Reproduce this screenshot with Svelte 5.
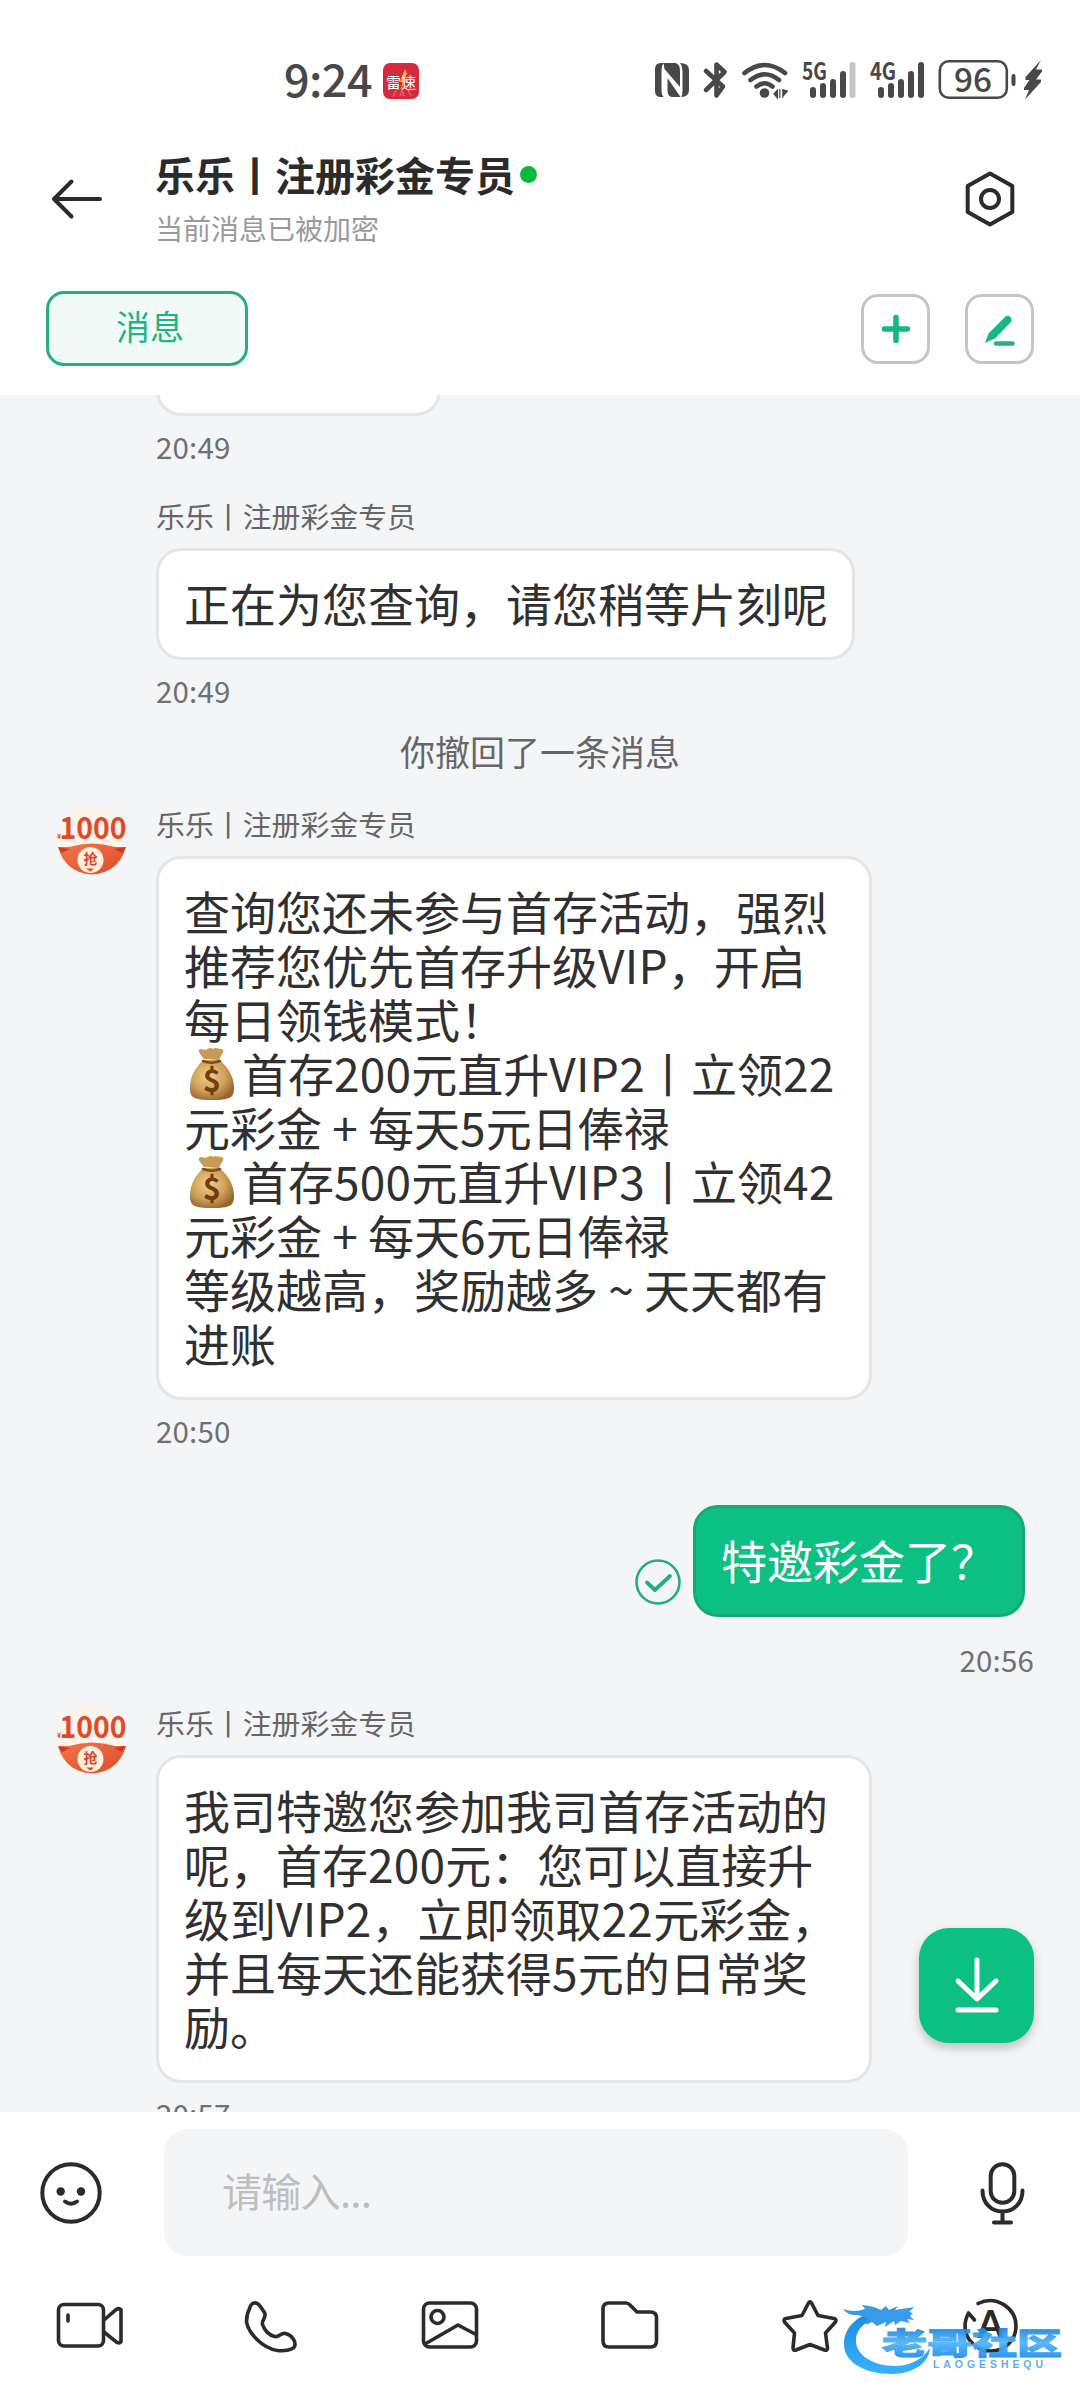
<script>
  const agent = '乐乐丨注册彩金专员';

  const promo = [
    '查询您还未参与首存活动，强烈',
    '推荐您优先首存升级VIP，开启',
    '每日领钱模式！',
    '$首存200元直升VIP2丨立领22',
    '元彩金+每天5元日俸禄',
    '$首存500元直升VIP3丨立领42',
    '元彩金+每天6元日俸禄',
    '等级越高，奖励越多~天天都有',
    '进账'
  ];

  const invite = [
    '我司特邀您参加我司首存活动的',
    '呢，首存200元：您可以直接升',
    '级到VIP2，立即领取22元彩金，',
    '并且每天还能获得5元的日常奖',
    '励。'
  ];

  // "$" marks a money bag, "+" and "~" are centred in a full-width cell
  const split = (line) => line.split(/([$+~]|[A-Z0-9]+)/).filter(Boolean);
  const isLatin = (part) => /^[A-Z0-9]/.test(part);
</script>

{#snippet moneyBag()}
  <svg class="bag" viewBox="0 0 58 54" aria-hidden="true">
    <defs>
      <radialGradient id="bagFill" cx="0.42" cy="0.4" r="0.65">
        <stop offset="0" stop-color="#f0cf8c" />
        <stop offset="0.6" stop-color="#cfa059" />
        <stop offset="1" stop-color="#94662b" />
      </radialGradient>
    </defs>
    <path d="M20 10C17 6 14 3 15 1c2-2 5 0 7 0 2-2 5-3 7-1 3-2 5 0 8 0 3 0 3 3 1 5l-3 6z" fill="#c79a58" />
    <path d="M20 11h15c7 5 15 15 15 28 0 10-4 12-22 12S6 49 6 39C6 26 13 16 20 11z" fill="url(#bagFill)" />
    <path d="M19 12c5 2 12 2 17 0" fill="none" stroke="#7b4d1e" stroke-width="2.6" stroke-linecap="round" />
    <text x="28" y="43" text-anchor="middle" font-size="31" font-weight="700" fill="#733d13">$</text>
  </svg>
{/snippet}

{#snippet avatar()}
  <svg class="avatar" viewBox="0 0 70 70" aria-hidden="true">
    <defs>
      <clipPath id="avatarClip"><circle cx="35" cy="35" r="34.5" /></clipPath>
      <linearGradient id="avatarTop" x1="0" y1="0" x2="0" y2="1">
        <stop offset="0" stop-color="#fbf3e8" />
        <stop offset="1" stop-color="#fdf6f0" />
      </linearGradient>
      <linearGradient id="avatarRed" x1="0" y1="0" x2="1" y2="1">
        <stop offset="0" stop-color="#f0764d" />
        <stop offset="1" stop-color="#e04a28" />
      </linearGradient>
    </defs>
    <g clip-path="url(#avatarClip)">
      <rect width="70" height="70" fill="url(#avatarTop)" />
      <path d="M0 42l12 0q23-7 46 0l12 0v28H0z" fill="url(#avatarRed)" />
      <path d="M0 42l13 2-8 4zM70 42l-13 2 8 4z" fill="#c83d22" />
      <circle cx="33.500" cy="55" r="13" fill="#fdf0dc" />
      <text x="33.500" y="59" text-anchor="middle" font-size="14" font-weight="700" fill="#d8432a">抢</text>
      <path d="M29 63.500h8l-3.500 3z" fill="#d8432a" />
    </g>
    <text x="0" y="34" font-size="7" font-weight="700" fill="#e0492c">¥</text>
    <text x="2.500" y="34" font-size="31" font-weight="700" fill="#e0492c" textLength="67" lengthAdjust="spacingAndGlyphs">1000</text>
  </svg>
{/snippet}

{#snippet lines(rows)}
  {#each rows as row}
    <span class="line"
      >{#each split(row) as part}{#if part === '$'}{@render moneyBag()}{:else if part === '+' || part === '~'}<span class="cell">{part}</span
          >{:else if isLatin(part)}<span class="run">{part}</span>{:else}{part}{/if}{/each}</span
    >
  {/each}
{/snippet}

<div class="page">
  <div class="status">
    <span class="clock">9:24</span>
    <svg class="app" viewBox="0 0 36 36">
      <rect width="36" height="36" rx="7" fill="#d42a40" />
      <path d="M10 34l3-7M17 33l2-6 2 6M28 33l-3-6" stroke="#e8606c" stroke-width="1.5" fill="none" />
      <path d="M22 6l-5 13h3l-3 8 7-11h-3l3-5z" fill="#f8b62c" />
      <text x="18" y="24.5" text-anchor="middle" font-size="15" fill="#fff">雷速</text>
    </svg>
    <svg class="tray" viewBox="650 56 396 48">
      <path d="M661 63h3q-2.500 2-2.500 8v18q0 6 2 8H661q-6 0-6-6V69q0-6 6-6zM680 63q9 0 9 7v20q0 7-8 7 1.500-2 1.500-6V72q0-6-2.500-9z" fill="#484848" />
      <path d="M663.500 63h12q4.500 1 4.500 8v16L664.500 69zM667.500 78l13 19h-9q-4-1-4-6z" fill="#484848" />
      <path d="M706 71l17 15.500-6.500 9V64.500l8 7.500L706 90" fill="none" stroke="#484848" stroke-width="4.600" stroke-linecap="round" stroke-linejoin="round" />
      <g fill="none" stroke="#484848" stroke-width="4.600" stroke-linecap="round">
        <path d="M744.500 73q20-16 40.500 0" />
        <path d="M750.500 80q14-11.500 28.500 0" />
        <path d="M756.500 86.500q8-6.500 16 0" />
      </g>
      <circle cx="764.500" cy="93" r="4.800" fill="#484848" />
      <path d="M774 94l3.500-4v8zM779.800 89v9M782.800 89v9M787.500 91l-3.500 4v-5z" fill="#484848" stroke="#484848" stroke-width="1.200" />
      <text x="802" y="80" font-size="24" font-weight="700" textLength="25" lengthAdjust="spacingAndGlyphs" fill="#484848">5G</text>
      <g stroke="#484848" stroke-width="6" stroke-linecap="round">
        <path d="M813 90v5M823 86v9M833 82v13M843 74v21" />
        <path d="M852.500 65v30" stroke="#c6c6c6" />
        <path d="M881 90v5M891 86v9M901 82v13M911 74v21M921 65v30" />
      </g>
      <text x="870" y="80" font-size="24" font-weight="700" textLength="26" lengthAdjust="spacingAndGlyphs" fill="#484848">4G</text>
      <rect x="939.800" y="61.300" width="67" height="36.500" rx="9" fill="none" stroke="#484848" stroke-width="2.600" />
      <rect x="1011.500" y="74" width="4" height="12" rx="2" fill="#484848" />
      <text x="973" y="91.800" text-anchor="middle" font-size="33" font-weight="500" textLength="38" lengthAdjust="spacingAndGlyphs" fill="#484848">96</text>
      <path d="M1041 60l-15.500 17v3h4l-5.500 8v2h5l-4 9.500 16-17.500v-2.500h-5l6-8v-2h-6z" fill="#484848" />
    </svg>
  </div>

  <header>
    <svg class="back" viewBox="0 0 52 40">
      <path d="M49 20H3M20.500 2.500L3 20l17.500 17.500" />
    </svg>
    <div class="who">
      <h1>{agent}<i></i></h1>
      <p>当前消息已被加密</p>
    </div>
    <svg class="gear" viewBox="0 0 52 58">
      <path d="M26 3.500L48.300 16v26L26 54.500 3.700 42V16z" />
      <circle cx="26" cy="29" r="9" />
    </svg>
  </header>

  <nav>
    <span class="tab">消息</span>
    <button aria-label="添加">
      <svg viewBox="0 0 34 34"><path d="M17 5.500v23M5.500 17h23" stroke="#14b981" stroke-width="5.600" stroke-linecap="round" /></svg>
    </button>
    <button aria-label="编辑">
      <svg viewBox="0 0 34 34">
        <path d="M22.500 4.500a4 4 0 0 1 5.500 5.500L12 26.500 2 31 5.500 21.500z" fill="#14b981" />
        <path d="M13 31.500h16.500" stroke="#2aae82" stroke-width="4.400" stroke-linecap="round" />
      </svg>
    </button>
  </nav>

  <main>
    <div class="bubble stub"></div>
    <time>20:49</time>

    <section class="first">
      <div class="name">{agent}</div>
      <div class="bubble">{@render lines(['正在为您查询，请您稍等片刻呢'])}</div>
      <time>20:49</time>
    </section>

    <div class="notice">你撤回了一条消息</div>

    <section>
      <div class="face">{@render avatar()}</div>
      <div class="name">{agent}</div>
      <div class="bubble wide">{@render lines(promo)}</div>
      <time>20:50</time>
    </section>

    <div class="mine">
      <svg class="sent" viewBox="0 0 46 46">
        <circle cx="23" cy="23" r="21.500" stroke-width="2.600" />
        <path d="M12 23.500l8 7.500L35 17" stroke-width="3.800" />
      </svg>
      <div class="bubble green">{@render lines(['特邀彩金了？'])}</div>
    </div>
    <time class="right">20:56</time>

    <section class="last">
      <div class="face">{@render avatar()}</div>
      <div class="name">{agent}</div>
      <div class="bubble wide">{@render lines(invite)}</div>
      <time>20:57</time>
    </section>
  </main>

  <footer>
    <div class="entry">
      <svg class="smile" viewBox="0 0 62 62">
        <circle cx="31" cy="31" r="28.700" fill="none" stroke="#2b2b2c" stroke-width="4" />
        <circle cx="20.700" cy="29.500" r="4.200" fill="#2b2b2c" />
        <circle cx="41" cy="29.500" r="4.200" fill="#2b2b2c" />
        <path d="M25 39.500q6 4.500 12 0" fill="none" stroke="#2b2b2c" stroke-width="4" stroke-linecap="round" />
      </svg>
      <div class="input">请输入...</div>
      <svg class="mic" viewBox="0 0 46 64">
        <rect x="10.700" y="3.200" width="23.600" height="38.600" rx="11.800" />
        <path d="M2.500 29.500C2.500 42 11 50.500 22.500 50.500S42.500 42 42.500 29.500M22.500 51v10.500M14 61.500h17" />
      </svg>
    </div>
    <div class="tools">
      <svg viewBox="0 0 72 60">
        <rect x="4.500" y="9.500" width="45" height="41.500" rx="5.500" />
        <path d="M14 20v6M50 25l12-10.300q3-2 5 0v32q-1.500 2-4.500 .500L50 37" />
      </svg>
      <svg viewBox="0 0 72 60">
        <path d="M15.500 13.500C17.500 6 23 7 26 11l4.500 6.500c2.500 5-3 7-2 12 2 6 7 11 12 12 5 1 6-4 11-3 6 1 11 8 9 13-1 3-10 5-17 4C28 53 14.500 38 12.500 27c0-5 1-9.500 3-13.500z" />
      </svg>
      <svg viewBox="0 0 72 60">
        <rect x="9.500" y="8" width="53" height="44" rx="6" />
        <circle cx="23.500" cy="22" r="6.500" />
        <path d="M11 49L44 30l18 9.500" />
      </svg>
      <svg viewBox="0 0 72 60">
        <path d="M15 8h17q2 0 4 2l7 7h13.500q6 0 6 6V46q0 6-6 6H15q-6 0-6-6V14q0-6 6-6z" />
      </svg>
      <svg viewBox="0 0 72 60">
        <path d="M34.500 8q1.500-2.500 3 0l6.500 12.500 16 3q3 .500 1.500 3.500L51.500 38l2 15q0 3-3 2L36 49.500 22 55q-3 1-3-2l1.500-15L10.500 27q-1.500-3 1.500-3.500l16-3z" />
      </svg>
      <svg viewBox="0 0 72 60">
        <path d="M24 8.500C42 -.500 62 13 62 31 62 46 50 56 37 56 22 56 11 44 11 31q0-6 3.500-13l6 7" />
        <text x="36.500" y="43" text-anchor="middle" font-size="38" font-weight="700">A</text>
      </svg>
    </div>
  </footer>

  <button class="jump" aria-label="最新消息">
    <svg viewBox="0 0 60 60">
      <path d="M30 5v37M11 26l19 18 19-18M11 55h38" />
    </svg>
  </button>

  <svg class="mark" viewBox="838 2290 232 92">
    <defs>
      <linearGradient id="wave" x1="0" y1="0" x2="0" y2="1">
        <stop offset="0" stop-color="#0c7fe0" />
        <stop offset="1" stop-color="#27aef8" />
      </linearGradient>
      <linearGradient id="letters" x1="0" y1="0" x2="0" y2="1">
        <stop offset="0.200" stop-color="#1b84e2" />
        <stop offset="0.550" stop-color="#4fb4f6" />
        <stop offset="0.900" stop-color="#1c8eec" />
      </linearGradient>
    </defs>
    <path d="M882 2311c-24 2-38 16-38 33 0 18 20 30 48 30 21 0 37-11 38-26-8 12-21 18-35 18-22 0-39-11-39-25 0-12 9-21 25-22z" fill="url(#wave)" />
    <path d="M843 2309q11 4 22 0l-3-4q12 1 19 5l5-4 3 4 9-4-3 4 19-3-5 5 4 1-3 3 4 4-7-1 3 4-9-2-6 4-1-4-9 6 1-5-9 4-5-4-6 3 2-7-10-3q-10 1-15-6z" fill="#2a93e8" />
    <text transform="translate(882 2353.500) scale(1.500 1)" font-size="30" font-weight="900" fill="url(#letters)" stroke="url(#letters)" stroke-width="1">老哥社区</text>
    <text class="latin" x="933" y="2367.500" font-size="10.500" font-weight="700" textLength="110" fill="#58a9ea">LAOGESHEQU</text>
  </svg>
</div>

<style>
  :global(body) {
    margin: 0;
    background: #fff;
  }
  .page {
    position: relative;
    display: flex;
    flex-direction: column;
    width: 1080px;
    height: 2400px;
    overflow: hidden;
    background: #fefefe;
    color: #2b2b2c;
    font-family: 'Noto Sans CJK SC', 'Noto Sans', sans-serif;
  }
  svg {
    display: block;
    flex: none;
    overflow: visible;
  }
  button {
    padding: 0;
    font: inherit;
  }
  .status {
    display: flex;
    align-items: center;
    height: 48px;
    padding: 56px 0 0 284px;
  }
  .clock {
    width: 99px;
    margin-top: -5px;
    font-size: 45px;
    font-weight: 500;
    line-height: 48px;
    letter-spacing: -0.6px;
    color: #484848;
  }
  .app {
    width: 36px;
    height: 36px;
    margin-top: 2px;
  }
  .tray {
    width: 396px;
    height: 48px;
    margin-left: 231px;
  }
  header {
    display: flex;
    align-items: center;
    height: 100px;
    padding: 45px 64px 0 51px;
  }
  .back {
    width: 52px;
    height: 40px;
    fill: none;
    stroke: #2b2b2c;
    stroke-width: 4;
    stroke-linecap: round;
    stroke-linejoin: round;
  }
  .who {
    flex: 1;
    padding-left: 52px;
  }
  h1 {
    display: flex;
    align-items: center;
    margin: 0;
    font-size: 40px;
    font-weight: 700;
    line-height: 56px;
  }
  h1 i {
    width: 17px;
    height: 17px;
    margin: 0 0 0 5px;
    border-radius: 50%;
    background: #07b83a;
  }
  .who p {
    margin: 0;
    padding-top: 2px;
    font-size: 28px;
    line-height: 48px;
    color: #9a9a9b;
  }
  .gear {
    width: 52px;
    height: 58px;
    fill: none;
    stroke: #2b2b2c;
    stroke-width: 4;
    stroke-linejoin: round;
  }
  nav {
    display: flex;
    align-items: center;
    gap: 35px;
    height: 75px;
    padding: 42px 46px 29px;
  }
  .tab {
    box-sizing: border-box;
    width: 202px;
    height: 75px;
    margin-right: auto;
    padding-left: 6px;
    border: 3px solid #2bac80;
    border-radius: 18px;
    background: #f2faf8;
    color: #1db584;
    font-size: 34px;
    line-height: 64px;
    text-align: center;
  }
  nav button {
    display: flex;
    align-items: center;
    justify-content: center;
    box-sizing: border-box;
    width: 69px;
    height: 70px;
    border: 3px solid #c5c5c6;
    border-radius: 17px;
    background: #fff;
  }
  nav button svg {
    width: 34px;
    height: 34px;
  }
  main {
    height: 1717px;
    overflow: hidden;
    background: #f4f5f7;
  }
  .bubble {
    box-sizing: border-box;
    width: fit-content;
    padding: 24px 24px 28px 25px;
    border: 3px solid #e4e5e7;
    border-radius: 25px;
    background: #fefefe;
    font-size: 46px;
    line-height: 54px;
    color: #303031;
  }
  .stub {
    width: 285px;
    height: 60px;
    margin: -39px 0 0 156px;
  }
  .wide {
    width: 716px;
  }
  .line {
    display: flex;
    height: 54px;
    white-space: nowrap;
  }
  .cell {
    width: 46px;
    text-align: center;
  }
  .run {
    letter-spacing: 0.25px;
  }
  .bag {
    width: 58px;
    height: 54px;
    margin-top: 4px;
  }
  time {
    display: block;
    margin: 10px 0 0 156px;
    font-size: 29.5px;
    line-height: 40px;
    letter-spacing: 0.15px;
    color: #6f7074;
  }
  section {
    position: relative;
    margin-top: 33px;
    padding-left: 156px;
  }
  section time {
    margin-left: 0;
  }
  .first {
    margin-top: 30px;
  }
  .last {
    margin-top: 24px;
  }
  .face {
    position: absolute;
    left: 57px;
    top: 1px;
  }
  .avatar {
    width: 70px;
    height: 70px;
  }
  .name {
    margin-bottom: 12px;
    font-size: 28.9px;
    line-height: 38px;
    padding-bottom: 2px;
    color: #666667;
  }
  .notice {
    margin-top: 21px;
    font-size: 35px;
    line-height: 40px;
    text-align: center;
    color: #666667;
  }
  .mine {
    display: flex;
    justify-content: flex-end;
    align-items: flex-end;
    gap: 12px;
    margin-top: 55px;
    padding-right: 55px;
  }
  .green {
    width: 332px;
    border-color: #17a877;
    background: #0cc084;
    color: #fff;
  }
  .sent {
    width: 46px;
    height: 46px;
    margin-bottom: 12px;
    fill: none;
    stroke: #23ae80;
    stroke-linecap: round;
    stroke-linejoin: round;
  }
  .right {
    margin: 22px 46px 0 0;
    text-align: right;
  }
  footer {
    flex: 1;
    background: #fefefe;
  }
  .entry {
    display: flex;
    align-items: center;
    padding: 17px 54px 0 40px;
  }
  .smile {
    width: 62px;
    height: 62px;
  }
  .input {
    width: 686px;
    height: 127px;
    margin-left: 62px;
    padding-left: 58px;
    border-radius: 24px;
    background: #f4f5f7;
    font-size: 40px;
    line-height: 122px;
    letter-spacing: -0.7px;
    color: #bdbec0;
  }
  .mic {
    width: 46px;
    height: 64px;
    margin-left: auto;
    fill: none;
    stroke: #2b2b2c;
    stroke-width: 4;
    stroke-linecap: round;
  }
  .tools {
    display: grid;
    grid-template-columns: repeat(6, 180px);
    justify-items: center;
    padding-top: 39px;
  }
  .tools svg {
    width: 72px;
    height: 60px;
    fill: none;
    stroke: #2b2b2c;
    stroke-width: 3.6;
    stroke-linecap: round;
    stroke-linejoin: round;
  }
  .tools text {
    fill: #2b2b2c;
    stroke: none;
    font-family: Lato, sans-serif;
  }
  .jump {
    position: absolute;
    left: 919px;
    top: 1928px;
    display: flex;
    align-items: center;
    justify-content: center;
    width: 115px;
    height: 115px;
    border: 0;
    border-radius: 30px;
    background: #0cc084;
    box-shadow: 0 5px 10px rgba(40, 60, 60, 0.28);
  }
  .jump svg {
    width: 60px;
    height: 60px;
    margin-top: -2px;
    fill: none;
    stroke: #fff;
    stroke-width: 5;
    stroke-linecap: round;
    stroke-linejoin: round;
  }
  .mark {
    position: absolute;
    left: 838px;
    top: 2290px;
    width: 232px;
    height: 92px;
    opacity: 0.93;
  }
  .latin {
    font-family: 'Liberation Sans', sans-serif;
  }
</style>
